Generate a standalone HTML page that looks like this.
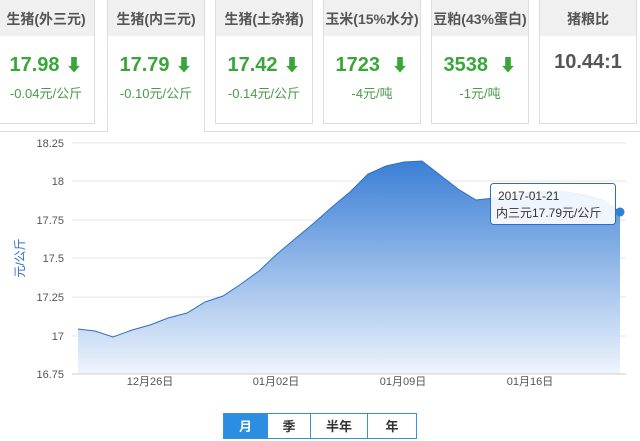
<!DOCTYPE html>
<html><head><meta charset="utf-8"><style>
body{margin:0;width:640px;height:441px;background:#fff;font-family:"Liberation Sans","Noto Sans CJK SC",sans-serif;position:relative;overflow:hidden}
.c{position:absolute;top:-2px;width:96px;height:124px;border:1px solid #ddd;background:#fff;text-align:center}
.c .h{height:37px;background:#f0f0f0;line-height:41px;font-size:14px;font-weight:bold;color:#555}
.c .v{font-size:20px;font-weight:bold;color:#3aa63a;margin-top:15px;height:26px}
.c .v span{font-size:17px;margin-left:6px}
.c .d{font-size:13px;color:#4a9a4a;margin-top:6px}
.line{position:absolute;top:131px;height:1px;background:#ddd}
.b{position:absolute;top:413px;height:26px;border:1px solid #3b8fd6;font-size:13px;font-weight:bold;line-height:26px;text-align:center;color:#333;box-sizing:border-box}
</style></head><body>
<div class="line" style="left:0;width:108px"></div>
<div class="line" style="left:205px;width:435px"></div>
<div class="c" style="left:-3px"><div class="h">生猪(外三元)</div><div class="v">17.98<span>⬇</span></div><div class="d">-0.04元/公斤</div></div>
<div class="c" style="left:107px;height:133px;border-bottom:none"><div class="h">生猪(内三元)</div><div class="v">17.79<span>⬇</span></div><div class="d">-0.10元/公斤</div></div>
<div class="c" style="left:215px"><div class="h">生猪(土杂猪)</div><div class="v">17.42<span>⬇</span></div><div class="d">-0.14元/公斤</div></div>
<div class="c" style="left:323px"><div class="h">玉米(15%水分)</div><div class="v">1723 <span>⬇</span></div><div class="d">-4元/吨</div></div>
<div class="c" style="left:431px"><div class="h">豆粕(43%蛋白)</div><div class="v">3538 <span>⬇</span></div><div class="d">-1元/吨</div></div>
<div class="c" style="left:539px"><div class="h">猪粮比</div><div class="v" style="color:#555">10.44:1</div></div>
<svg width="640" height="441" style="position:absolute;left:0;top:0" font-family="Liberation Sans,Noto Sans CJK SC,sans-serif">
<defs><linearGradient id="g" x1="0" y1="0" x2="0" y2="1"><stop offset="0" stop-color="#3b7fd6"/><stop offset="1" stop-color="#eef4fc"/></linearGradient></defs>
<g stroke="#e6e6e6"><line x1="72" y1="143" x2="626" y2="143"/><line x1="72" y1="181" x2="626" y2="181"/><line x1="72" y1="220" x2="626" y2="220"/><line x1="72" y1="258" x2="626" y2="258"/><line x1="72" y1="297" x2="626" y2="297"/><line x1="72" y1="336" x2="626" y2="336"/></g>
<path d="M78,329 L95,331 113,337 132,330 150,325 168,318 187,313 205,302 223,296 241,284 259,271 277,254 296,238 314,223 332,207 350,192 368,174 386,166 404,162 422,161 440,175 458,189 476,200 494,198 512,196 530,192 549,191 567,192 585,195 603,200 620,212 L620,374 78,374Z" fill="url(#g)"/>
<path d="M78,329 L95,331 113,337 132,330 150,325 168,318 187,313 205,302 223,296 241,284 259,271 277,254 296,238 314,223 332,207 350,192 368,174 386,166 404,162 422,161 440,175 458,189 476,200 494,198 512,196 530,192 549,191 567,192 585,195 603,200 620,212" fill="none" stroke="#2e6fc4" stroke-width="1"/>
<line x1="72" y1="374" x2="626" y2="374" stroke="#ccc"/>
<g font-size="11" fill="#555" text-anchor="end"><text x="64" y="147">18.25</text><text x="64" y="185">18</text><text x="64" y="224">17.75</text><text x="64" y="262">17.5</text><text x="64" y="301">17.25</text><text x="64" y="340">17</text><text x="64" y="378">16.75</text></g>
<g font-size="11" fill="#555" text-anchor="middle"><text x="150" y="385">12月26日</text><text x="276" y="385">01月02日</text><text x="403" y="385">01月09日</text><text x="530" y="385">01月16日</text></g>
<text transform="translate(24,258) rotate(-90)" font-size="12" fill="#2e6fc4" text-anchor="middle">元/公斤</text>
<rect x="490.5" y="183.5" width="125" height="41" rx="3" fill="#fff" fill-opacity="0.9" stroke="#2e6fc4"/>
<text x="498" y="200" font-size="12" fill="#333">2017-01-21</text>
<text x="496" y="217" font-size="12" fill="#333">内三元17.79元/公斤</text>
<circle cx="620" cy="212" r="4.5" fill="#2e7fd6"/>
</svg>
<div class="b" style="left:223px;width:45px;background:#2b8ee0;color:#fff">月</div>
<div class="b" style="left:267px;width:44px">季</div>
<div class="b" style="left:310px;width:58px">半年</div>
<div class="b" style="left:367px;width:50px">年</div>
</body></html>
